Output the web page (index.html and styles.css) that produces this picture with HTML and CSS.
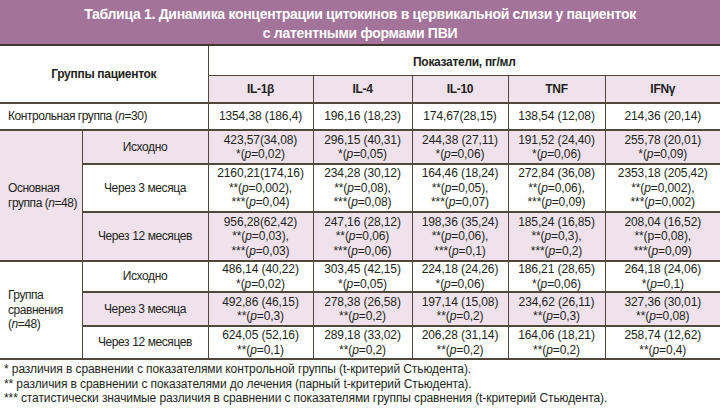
FILE: index.html
```html
<!DOCTYPE html>
<html lang="ru">
<head>
<meta charset="utf-8">
<link rel="stylesheet" href="styles.css">
</head>
<body>
<div class="page">
  <div class="title">Таблица 1. Динамика концентрации цитокинов в цервикальной слизи у пациенток<br>с латентными формами ПВИ</div>
  <table class="data">
    <colgroup>
      <col class="c-group"><col class="c-sub"><col class="c1"><col class="c2"><col class="c3"><col class="c4"><col class="c5">
    </colgroup>
    <thead>
      <tr class="h1">
        <th colspan="2" rowspan="2" class="hgroup">Группы пациенток</th>
        <th colspan="5" class="hind">Показатели, пг/мл</th>
      </tr>
      <tr class="h2">
        <th class="lav">IL-1β</th><th class="lav">IL-4</th><th class="lav">IL-10</th><th class="lav">TNF</th><th class="lav">IFNγ</th>
      </tr>
    </thead>
    <tbody>
      <tr class="r-control">
        <td colspan="2" class="left">Контрольная группа (<i>n</i>=30)</td>
        <td>1354,38 (186,4)</td><td>196,16 (18,23)</td><td>174,67(28,15)</td><td>138,54 (12,08)</td><td>214,36 (20,14)</td>
      </tr>
      <tr class="r2 lavrow">
        <td rowspan="3" class="left grp lav">Основная<br>группа (<i>n</i>=48)</td>
        <td class="sub">Исходно</td>
        <td>423,57(34,08)<br>*(<i>p</i>=0,02)</td>
        <td>296,15 (40,31)<br>*(<i>p</i>=0,05)</td>
        <td>244,38 (27,11)<br>*(<i>p</i>=0,06)</td>
        <td>191,52 (24,40)<br>*(<i>p</i>=0,06)</td>
        <td>255,78 (20,01)<br>*(<i>p</i>=0,09)</td>
      </tr>
      <tr class="r3">
        <td class="sub">Через 3 месяца</td>
        <td>2160,21(174,16)<br>**(<i>p</i>=0,002),<br>***(<i>p</i>=0,04)</td>
        <td>234,28 (30,12)<br>**(<i>p</i>=0,08),<br>***(<i>p</i>=0,08)</td>
        <td>164,46 (18,24)<br>**(<i>p</i>=0,05),<br>***(<i>p</i>=0,07)</td>
        <td>272,84 (36,08)<br>**(<i>p</i>=0,06),<br>***(<i>p</i>=0,09)</td>
        <td>2353,18 (205,42)<br>**(<i>p</i>=0,002),<br>***(<i>p</i>=0,002)</td>
      </tr>
      <tr class="r3b lavrow">
        <td class="sub">Через 12 месяцев</td>
        <td>956,28(62,42)<br>**(<i>p</i>=0,03),<br>***(<i>p</i>=0,03)</td>
        <td>247,16 (28,12)<br>**(<i>p</i>=0,06)<br>***(<i>p</i>=0,06)</td>
        <td>198,36 (35,24)<br>**(<i>p</i>=0,06),<br>***(<i>p</i>=0,1)</td>
        <td>185,24 (16,85)<br>**(<i>p</i>=0,3),<br>***(<i>p</i>=0,2)</td>
        <td>208,04 (16,52)<br>**(p=0,08),<br>***(<i>p</i>=0,09)</td>
      </tr>
      <tr class="r2a">
        <td rowspan="3" class="left grp">Группа<br>сравнения<br>(<i>n</i>=48)</td>
        <td class="sub">Исходно</td>
        <td>486,14 (40,22)<br>*(<i>p</i>=0,02)</td>
        <td>303,45 (42,15)<br>*(<i>p</i>=0,05)</td>
        <td>224,18 (24,26)<br>*(<i>p</i>=0,06)</td>
        <td>186,21 (28,65)<br>*(<i>p</i>=0,06)</td>
        <td>264,18 (24,06)<br>*(<i>p</i>=0,1)</td>
      </tr>
      <tr class="r2b lavrow">
        <td class="sub">Через 3 месяца</td>
        <td>492,86 (46,15)<br>**(<i>p</i>=0,3)</td>
        <td>278,38 (26,58)<br>**(<i>p</i>=0,2)</td>
        <td>197,14 (15,08)<br>**(<i>p</i>=0,2)</td>
        <td>234,62 (26,11)<br>**(<i>p</i>=0,3)</td>
        <td>327,36 (30,01)<br>**(<i>p</i>=0,08)</td>
      </tr>
      <tr class="r2c">
        <td class="sub">Через 12 месяцев</td>
        <td>624,05 (52,16)<br>**(<i>p</i>=0,1)</td>
        <td>289,18 (33,02)<br>**(<i>p</i>=0,2)</td>
        <td>206,28 (31,14)<br>**(<i>p</i>=0,2)</td>
        <td>164,06 (18,21)<br>**(<i>p</i>=0,2)</td>
        <td>258,74 (12,62)<br>**(<i>p</i>=0,4)</td>
      </tr>
    </tbody>
  </table>
  <div class="notes">
    <p>* различия в сравнении с показателями контрольной группы (t-критерий Стьюдента).</p>
    <p>** различия в сравнении с показателями до лечения (парный t-критерий Стьюдента).</p>
    <p>*** статистически значимые различия в сравнении с показателями группы сравнения (t-критерий Стьюдента).</p>
  </div>
</div>
</body>
</html>
```

FILE: styles.css
```css
html, body {
  margin: 0;
  padding: 0;
  background: #ffffff;
}
.page {
  width: 720px;
  height: 410px;
  overflow: hidden;
  font-family: "Liberation Sans", Arial, sans-serif;
  color: #231f20;
}
.title {
  height: 46px;
  box-sizing: border-box;
  padding-top: 5px;
  background: #a3739a;
  color: #ffffff;
  font-weight: bold;
  font-size: 14px;
  letter-spacing: -0.3px;
  line-height: 19px;
  text-align: center;
  border-bottom: 2px solid #3e362c;
}
.data {
  width: 720px;
  border-collapse: collapse;
  table-layout: fixed;
  font-size: 12px;
  letter-spacing: -0.1px;
  line-height: 14.5px;
}
.c-group { width: 82px; }
.c-sub { width: 126px; }
.c1 { width: 105px; }
.c2 { width: 99px; }
.c3 { width: 96px; }
.c4 { width: 97px; }
.c5 { width: 115px; }
.data th, .data td {
  padding: 0 1px;
  text-align: center;
  vertical-align: middle;
  white-space: nowrap;
  border-left: 1px solid #50483a;
  border-right: 1px solid #50483a;
  border-bottom: 2px solid #50483a;
  background: #ffffff;
}
.data th {
  font-weight: bold;
  letter-spacing: -0.3px;
}
.data tr > :first-child { border-left: none; }
.data tr > :last-child { border-right: none; }
.h1 { height: 29px; }
.h1 .hind { border-bottom: 1px solid #50483a; padding-top: 3px; }
.h2 { height: 28px; }
.r-control { height: 27px; }
.r2 { height: 34px; }
.r3 { height: 48px; }
.r3b { height: 49px; }
.r2a { height: 31px; }
.r2b { height: 34px; }
.r2c { height: 33px; }
.data .lavrow td,
.data th.lav,
.data td.lav {
  background: #efe2ed;
}
.data .r2a td.grp { background: #ffffff; }
.data td.left {
  text-align: left;
  padding-left: 8px;
  border-left: none;
  letter-spacing: -0.45px;
}
.data td.sub { letter-spacing: -0.4px; }
.notes {
  padding: 2px 0 0 4px;
  font-size: 12px;
  letter-spacing: -0.1px;
  line-height: 14.5px;
}
.notes p { margin: 0; }
```
